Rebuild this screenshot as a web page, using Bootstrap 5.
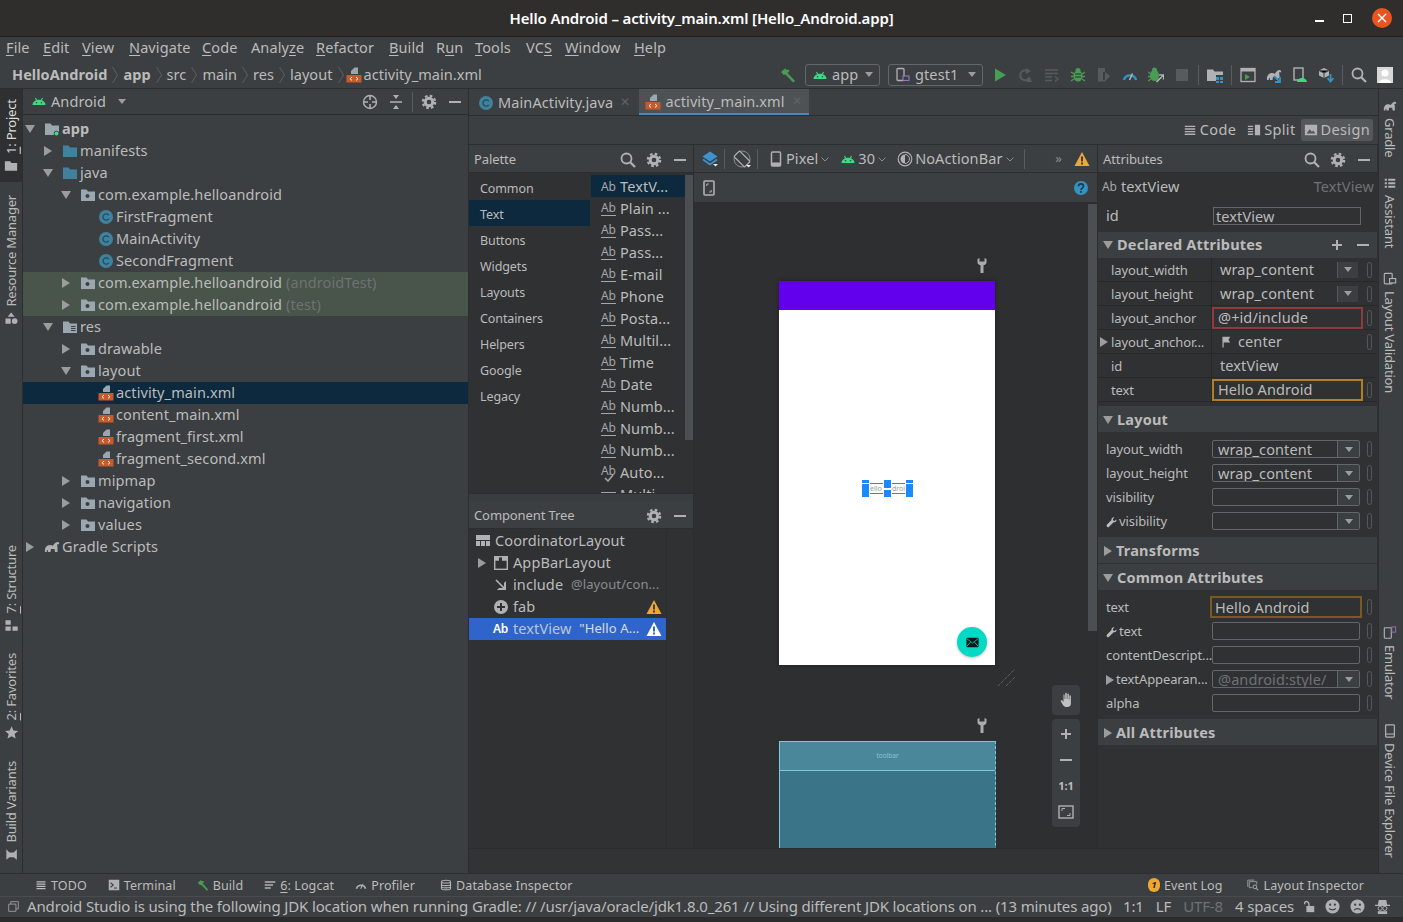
<!DOCTYPE html>
<html lang="en"><head><meta charset="utf-8"><title>Hello Android</title>
<link href="https://cdn.jsdelivr.net/npm/bootstrap@5.3.0/dist/css/bootstrap.min.css" rel="stylesheet">
<style>
:root{--pn:#3c3f41;--dk:#2f3133;--tx:#bbbbbb;--ln:#2b2d2f;--mut:#7d7f80}
html,body{height:922px;width:1403px;overflow:hidden}
body{background:#2a2a2a;color:var(--tx);font-family:"Noto Sans",sans-serif;font-size:14.5px;line-height:1.2;letter-spacing:.1px}
svg{display:block;flex:none}
.ic{width:16px;height:16px;color:#afb1b3}
.ttl{height:37px;background:#302d2d;border-bottom:1px solid #201e1e;color:#fff;font-weight:600;font-size:15px;letter-spacing:-.13px;position:relative}
.win{position:absolute;right:0;top:0;height:36px}
.win i{display:block}
.w-min{width:9px;height:2px;background:#fff;margin:5px 19px 0 0}
.w-max{width:9px;height:9px;border:1.5px solid #fff;margin-right:20px}
.w-x{width:20px;height:20px;border-radius:50%;background:#e95420;margin-right:11px;color:#fff;display:flex!important;align-items:center;justify-content:center}
.menu{height:24px;background:var(--pn);display:grid;grid-template-columns:37px 39px 47px 73px 49px 65px 73px 47px 39px 51px 39px 69px 60px;padding:0 0 2px 6px;align-items:center;font-size:14.5px;white-space:nowrap}
.navb{height:28px;background:var(--pn);border-bottom:1px solid var(--ln);padding:0 5px 0 12px}
.crumb{white-space:nowrap}
.crumb b{font-weight:700;letter-spacing:.05px}
.crumb>span{letter-spacing:.05px}
.chev{width:6px;height:18px;color:#5d6062;margin:0 5px}
.chev.z{margin-right:2px}
.xic{margin-right:2px}
.tb{width:26px;height:26px;display:flex;align-items:center;justify-content:center}
.sep{width:1px;height:20px;background:#5a5d5f;margin:0 3px;flex:none;display:block}
.combo{height:22px;border:1px solid #646769;border-radius:3px;padding:0 6px;gap:4px;display:flex;align-items:center}
.combo.c1{width:75px}.combo.c2{width:95px}
.caret{width:0;height:0;border:4.5px solid transparent;border-top:5px solid #9a9c9e;border-bottom:0;flex:none;display:block}
.combo .caret{margin-left:auto}
.main{height:784px}
.stripe{width:23px;background:var(--pn);flex:none}
.stripe.l{border-right:1px solid var(--ln)}
.stripe.r{width:25px;border-left:1px solid var(--ln);padding-right:3px}
.vt{writing-mode:vertical-rl;font-size:13px;white-space:nowrap;display:flex;align-items:center;gap:5px;letter-spacing:-.2px}
.l .vt{transform:rotate(180deg);flex-direction:row;padding-right:1px}
.vt svg{width:14px;height:14px;color:#afb1b3}
.l .vt svg{transform:rotate(180deg)}
.sel-v{background:#2e3032;color:#ddd;height:93px;padding-top:9px;width:22px;justify-content:flex-start}
.vm1{margin-top:13px}.vm2{margin-top:auto}.vm3{margin-top:20px}.vm4{margin-top:22px;margin-bottom:11px}
.r .vm1{margin-top:19px}.r .vm0{margin-top:10px}.r .vm3{margin-top:23px}.r .vm5{margin-bottom:15px;margin-top:25px}
.proj{width:446px;flex:none;background:var(--pn);border-right:1px solid var(--ln)}
.phead{height:26px;border-bottom:1px solid var(--ln);padding:0 5px 0 8px;font-size:14.5px}
.icg{gap:10px}
.icg .sep{margin:0 -2px}
.tree{padding-top:3px;font-size:14.5px}
.row-t{height:22px;display:flex;align-items:center;white-space:nowrap}
.row-t.sel{background:#0d293e}
.row-t.tst{background:#49544a}
.l0{padding-left:3px}.l1{padding-left:21px}.l2{padding-left:39px}.l3{padding-left:57px}
.slot{width:18px;flex:none;display:flex;align-items:center}
.arr{display:block;width:0;height:0;flex:none}
.arr.d{border:5px solid transparent;border-top:8px solid #9a9c9e;border-bottom:0;margin-left:-1px}
.arr.r{border:5px solid transparent;border-left:8px solid #9a9c9e;border-right:0}
.dim{color:#6f7274}
.ed{width:909px;flex:none;background:var(--dk)}
.tabs{height:27px;background:var(--pn);border-bottom:1px solid var(--ln);padding-left:3px}
.tab{height:26px;padding:1px 5px 0 6px;gap:4px;display:flex;align-items:center;white-space:nowrap}
.tab.on{background:#4e5254;border-bottom:2px solid #4a88c7;padding:1px 7px 0 6px;margin-left:4px}
.x{color:#5f6264;font-size:12px;margin-left:3px}
.modes{height:29px;background:var(--pn);border-bottom:1px solid var(--ln);padding-right:5px;gap:2px;letter-spacing:.35px}
.mode{height:22px;padding:0 3px;gap:3px;display:flex;align-items:center}
.mode .ic{width:14px;height:14px}
.mode:first-child{margin-right:3px}
.mode.on{background:#55585a;border-radius:3px}
.cols{height:703px}
.pal{width:225px;flex:none;border-right:1px solid var(--ln)}
.ph{height:28px;background:var(--pn);border-bottom:1px solid var(--ln);padding:2px 5px 0 5px;font-size:13px;letter-spacing:-.1px;flex:none}
.pal-body{height:320px;padding-top:2px;flex:none}
.cats{width:121px;flex:none;font-size:12.5px;letter-spacing:-.1px}
.cats div{height:26px;padding:3px 0 0 11px;display:flex;align-items:center}
.cats div:first-child{height:25px;padding-top:2px}
.cats .sel{background:#0d293e}
.items{width:95px;flex:none;overflow:hidden;padding-left:1px}
.items div{height:22px;display:flex;align-items:center;white-space:nowrap;padding:2px 0 0 10px;gap:4px}
.items .sel{background:#0d293e}
.sb{width:8px;background:#4b4f51;height:265px;flex:none}
.ab{font-size:12px;color:#a5a7a9;border-bottom:1.5px solid #a5a7a9;line-height:10px;padding-bottom:2px;width:15px;flex:none;letter-spacing:-.2px;display:block}
.ab.n{border:0;padding:0}
.ab.ck{border:0;padding:0;position:relative;top:-2px}
.ab.ck svg{position:absolute;left:3px;top:8px}
.ab.ml{border-top:2px solid #a5a7a9;border-bottom:2px solid #a5a7a9;height:7px;padding:0}
.gapb{height:8px;background:#3a3d3f;border-top:1px solid var(--ln);flex:none}
.ct-b{height:319px;flex:none}
.ct{width:198px;flex:none;border-right:1px solid var(--ln);padding-top:1px}
.ct .row-t{padding-left:6px}
.ct .arr{margin-left:3px}
.ct .sel{background:#2f65ca;color:#b9c6d8}
.ct .sel .ab{color:#fff;font-weight:600;margin-right:5px}
.small{font-size:13px;color:#8a8c8e}
.ct .sel .small{color:#d7dde6}
.des{width:404px;flex:none;border-right:1px solid var(--ln)}
.d1{height:28px;background:var(--pn);border-bottom:1px solid var(--ln);padding:1px 7px 0 8px;font-size:14.5px;flex:none}
.d1 .sep{margin-right:0}
.d2{height:30px;background:var(--pn);border-bottom:1px solid var(--ln);padding:0 8px 0 7px;flex:none}
.m2{margin-left:2px}.m3{margin-left:3px}.m6{margin-left:6px}.m7{margin-left:7px}.m8{margin-left:8px}.m9{margin-left:9px}.m10{margin-left:10px}.m11{margin-left:11px}.m12{margin-left:12px}
.mr12{margin-right:12px}
.rot{width:18px;height:18px}
.canvas{height:645px;background:#2d2f31;position:relative;overflow:hidden}
.phone{position:absolute;left:85px;top:78px;width:216px;height:384px;background:#fff;box-shadow:0 0 4px #1d1e20}
.status{height:29px;background:#6200ee}
.wr{position:absolute;color:#a9abad;width:12px;height:16px;left:282px}
.wr.a{top:55px}.wr.b{top:515px}
.tv{position:absolute;left:83px;top:199px;width:52px;height:17px}
.hb{position:absolute;width:7px;height:17px;top:0;background:linear-gradient(#1a88ff 0 3px,#fff 3px 4px,#1a88ff 4px)}
.h1x{left:0}.h2x{left:22px}.h3x{left:44px}
.hb.m{background:linear-gradient(#1a88ff 0 8px,#fff 8px 10px,#1a88ff 10px)}
.tvl{position:absolute;top:3px;height:11px;border-top:1px solid #1a88ff;border-bottom:1px solid #1a88ff;width:13px;font-size:7px;line-height:9px;color:#999;letter-spacing:0;overflow:hidden}
.t1{left:8px}.t2{left:30px}
.fab{position:absolute;left:178px;top:346px;width:30px;height:30px;border-radius:50%;background:#03dac5;box-shadow:0 1px 3px #0004;display:flex;align-items:center;justify-content:center}
.bp{position:absolute;left:85px;top:538px;width:217px;height:120px;background:#3a7488;border:1px solid #80c8dc;border-right-style:dashed;border-bottom:0}
.bp div{height:29px;background:#4a879b;border-bottom:1px solid #80c8dc;font-size:6.5px;color:#86c5d8;text-align:center;line-height:28px;letter-spacing:0}
.rsz{position:absolute;left:304px;top:466px;width:18px;height:18px;color:#77797b}
.vsb{position:absolute;right:0;top:1px;width:9px;height:427px;background:#4b4f51}
.zm{position:absolute;left:358px;width:28px;background:#3c3f41;border-radius:4px;display:flex;flex-direction:column;align-items:center}
.zm.a{top:482px;height:30px;justify-content:center}
.zm.b{top:516px;height:108px;justify-content:center;gap:10px;font-weight:700;font-size:11px;color:#bbb;letter-spacing:0;line-height:16px}
.attrs{width:279px;flex:none;font-size:14.5px}
.a-title{height:27px;padding:0 3px 0 4px;flex:none}
.a-id{height:32px;padding-left:8px;flex:none}
.inp{border:1px solid #646769;height:18px;background:#2f3133;display:flex;align-items:center;padding-left:2px;color:#bbb;position:relative;line-height:1;overflow:hidden;white-space:nowrap}
.inp.dim{color:#6f7274}
.w148{width:148px;flex:none}
.sech{height:26px;background:var(--pn);font-weight:700;padding:1px 0 0 6px;letter-spacing:.2px;gap:4px;flex:none}
.sech.t{margin-top:1px}
.sech.o{padding:0 6px 0 6px;gap:10px}
.sech.o span{margin-left:-6px}
.r-d,.r-l{display:flex;align-items:center;height:24px;position:relative;flex:none}
.r-d{border-bottom:1px solid #26282a}
.r-d .lb{width:114px;flex:none;padding:2px 0 0 13px;font-size:13px;white-space:nowrap;overflow:hidden;letter-spacing:-.1px;border-right:1px solid #26282a;height:100%;display:flex;align-items:center}
.r-d .v{width:156px;padding:1px 0 0 8px;display:flex;align-items:center;height:100%;position:relative;white-space:nowrap}
.r-d .v.p{padding:0}
.r-d .arr{position:absolute;left:2px}
.pill{position:absolute;left:269px;width:5px;height:16px;border:1px solid #56595b;border-radius:3px}
.dd{position:absolute;width:21px;right:19px;height:16px;background:#3c3f41;border-left:1px solid #56595b;display:flex;align-items:center;justify-content:center}
.box{width:151px;height:22px;border:2px solid;display:flex;align-items:center;padding-left:4px;line-height:1;flex:none}
.box.red{border-color:#8f3b3b}.box.org{border-color:#b37f24}
.flag{width:13px;height:13px;margin-right:5px}
.r-l .lb{width:114px;flex:none;padding:2px 0 0 8px;font-size:13px;white-space:nowrap;letter-spacing:-.1px;display:flex;align-items:center;gap:2px}
.r-l .inp{width:148px;height:18px;border-radius:2px;padding:1px 0 0 5px}
.inp .c{position:absolute;right:0;top:0;bottom:0;width:22px;background:#3c3f41;border-left:1px solid #646769;display:flex;align-items:center;justify-content:center}
.r-l .inp.org2{border:2px solid #7a5a1e;height:22px;width:152px;margin-left:-2px;padding-left:3px;border-radius:0}
.hi{height:5px;flex:none}.lo{height:4px;flex:none}
.edband{height:25px;background:#313335;border-top:1px solid var(--ln)}
.tools{height:23px;background:var(--pn);border-top:1px solid var(--ln);font-size:12.5px;padding:0 39px 0 35px;letter-spacing:.1px}
.tools svg{width:12px;height:12px}
.tg{gap:21px}.tg2{gap:25px}
.tg .ti:last-child{margin-left:4px}
.ti{gap:4px;display:flex;align-items:center;white-space:nowrap}
.stat{height:21px;background:var(--pn);border-top:1px solid #4a4b4c;font-size:15px;padding:0 13px 2px 8px;white-space:nowrap;letter-spacing:-.14px}
.sr{gap:12px}
.sr .i1{margin-left:-4px;margin-right:-1px}.sr .i2,.sr .i3{margin-left:-2px}
.foot{height:5px;background:#2c2c2c}
.badge1{width:12px;height:14px;border-radius:6px;background:#f0a732;color:#222;font-size:9px;font-weight:700;display:flex;align-items:center;justify-content:center;letter-spacing:0}
u{text-underline-offset:2px;text-decoration-thickness:1px}
</style></head><body>
<svg width="0" height="0" class="position-absolute"><defs>
<symbol id="android" viewBox="0 0 16 16"><path fill="#3ddc84" d="M1.5 12c.2-3 3-5.200 6.500-5.200s6.300 2.200 6.500 5.200z"/><path stroke="#3ddc84" stroke-width="1.100" d="M4.500 5l1.200 2.200M11.500 5l-1.200 2.200"/><circle cx="5.500" cy="9.700" r=".8" fill="#3c3f41"/><circle cx="10.500" cy="9.700" r=".8" fill="#3c3f41"/></symbol>
<symbol id="folder" viewBox="0 0 16 16"><path fill="#40829e" d="M1 2.500h5.500l1.500 2h7v9.500H1z"/></symbol>
<symbol id="pkg" viewBox="0 0 16 16"><path fill="#9aa7b0" d="M1 2.500h5.500l1.500 2h7v9.500H1z"/><circle cx="7.500" cy="9" r="2" fill="#3c3f41"/></symbol>
<symbol id="res" viewBox="0 0 16 16"><path fill="#9aa7b0" d="M1 2.500h5.500l1.500 2h7v9.500H1z"/><path stroke="#3c3f41" d="M9 7.500h4.500M9 9.500h4.500M9 11.500h4.500"/></symbol>
<symbol id="mod" viewBox="0 0 16 16"><path fill="#9aa7b0" d="M1 2.500h5.500l1.500 2h7v9.500H1z"/><circle cx="12.500" cy="12.500" r="2.700" fill="#3c3f41"/><circle cx="12.500" cy="12.500" r="2" fill="#3ddc84"/></symbol>
<symbol id="cls" viewBox="0 0 16 16"><circle cx="8" cy="8" r="7" fill="#40829e"/><path fill="none" stroke="#1f4b5d" stroke-width="1.300" d="M10.800 6.100a3.200 3.200 0 1 0 0 3.800"/></symbol>
<symbol id="xml" viewBox="0 0 16 16"><path fill="#9aa7b0" d="M5 7V4l3.500-3.500H12V7z"/><rect x="0.500" y="8" width="15" height="7.500" fill="#c75b2a"/><path fill="none" stroke="#fff" stroke-width=".9" d="M6 10l-2 1.700 2 1.700M10 10l2 1.700-2 1.700"/></symbol>
<symbol id="gear" viewBox="0 0 16 16"><circle cx="8" cy="8" r="3.800" fill="none" stroke="currentColor" stroke-width="3"/><circle cx="8" cy="8" r="6.200" fill="none" stroke="currentColor" stroke-width="2.200" stroke-dasharray="2.600 2.270"/></symbol>
<symbol id="min" viewBox="0 0 16 16"><rect x="2" y="7" width="12" height="2" fill="currentColor"/></symbol>
<symbol id="plus" viewBox="0 0 16 16"><path d="M7 3h2v4h4v2H9v4H7V9H3V7h4z" fill="currentColor"/></symbol>
<symbol id="search" viewBox="0 0 16 16"><circle cx="6.500" cy="6.500" r="5" fill="none" stroke="currentColor" stroke-width="1.800"/><path stroke="currentColor" stroke-width="2.200" d="M10 10l5 5"/></symbol>
<symbol id="loc" viewBox="0 0 16 16"><circle cx="8" cy="8" r="6.500" fill="none" stroke="currentColor" stroke-width="1.400"/><path stroke="currentColor" stroke-width="1.600" d="M8 1v5M8 10v5M1 8h5M10 8h5"/></symbol>
<symbol id="coll" viewBox="0 0 16 16"><path fill="currentColor" d="M2 7.200h12v1.600H2zM5 1h6L8 5zM8 11l3 4H5z"/></symbol>
<symbol id="hammer" viewBox="0 0 16 16"><path fill="#499c54" d="M1 5l4-3.500 2 1.500 1.500-.5 1 1.500L7.500 6 15 14l-1.800 1.500L5.500 7.500 3.800 8z"/></symbol>
<symbol id="phone" viewBox="0 0 16 16"><rect x="3.500" y="1" width="9" height="14" rx="1" fill="none" stroke="currentColor" stroke-width="1.500"/><rect x="3.500" y="11.500" width="9" height="3.500" fill="currentColor"/></symbol>
<symbol id="dev" viewBox="0 0 16 16"><rect x="2" y="1.500" width="7" height="12" rx="1" fill="none" stroke="#afb1b3" stroke-width="1.300"/><rect x="8" y="9" width="6" height="4.500" fill="#3c3f41" stroke="#9876c0" stroke-width="1.100"/></symbol>
<symbol id="run" viewBox="0 0 16 16"><path fill="#499c54" d="M3 1.500L14 8 3 14.500z"/></symbol>
<symbol id="apply" viewBox="0 0 16 16"><path fill="none" stroke="#585b5d" stroke-width="2" d="M11 5a5 5 0 1 0 0 6.500"/><path fill="#585b5d" d="M8 1l5 3-5 3zM11 9l3 6H8z"/></symbol>
<symbol id="lines" viewBox="0 0 16 16"><path stroke="#585b5d" stroke-width="1.500" d="M1 3h13M1 6.500h13M1 10h7M1 13.500h7"/><path fill="none" stroke="#585b5d" stroke-width="1.400" d="M11 9.500l3 2.500-3 2.500"/></symbol>
<symbol id="bug" viewBox="0 0 16 16"><ellipse cx="8" cy="9" rx="4.500" ry="5.500" fill="#499c54"/><circle cx="8" cy="3.500" r="2.500" fill="#499c54"/><path stroke="#499c54" stroke-width="1.300" d="M1 5l3 2M15 5l-3 2M1 9.500h3M12 9.500h3M1 14l3-2M15 14l-3-2"/><path stroke="#2f3133" d="M5 7h6M5 10h6"/></symbol>
<symbol id="cover" viewBox="0 0 16 16"><path fill="#585b5d" d="M2 1h7v4l5 4-5 5.500H2z"/><path fill="#3c3f41" d="M7 5h2v8H7z"/></symbol>
<symbol id="prof" viewBox="0 0 16 16"><path fill="none" stroke="#3592c4" stroke-width="2.400" d="M2 13a6.200 6.200 0 0 1 12 0"/><path stroke="#afb1b3" stroke-width="1.600" d="M7.500 13l3-6.500"/></symbol>
<symbol id="bugA" viewBox="0 0 16 16"><ellipse cx="6.500" cy="8.500" rx="4.500" ry="5.500" fill="#499c54"/><circle cx="6.500" cy="3" r="2.500" fill="#499c54"/><path stroke="#499c54" stroke-width="1.300" d="M0 5l3 2M0 9.500h3M0 14l3-2"/><path stroke="#afb1b3" stroke-width="1.700" d="M8.500 15L15 8.500M11 8h4.500v4.500"/></symbol>
<symbol id="stop" viewBox="0 0 16 16"><rect x="2" y="2" width="12" height="12" fill="#585b5d"/></symbol>
<symbol id="struct" viewBox="0 0 16 16"><path fill="#afb1b3" d="M0 2.500h6l1.500 2H16V14H0z"/><rect x="9" y="8" width="7" height="8" fill="#3c3f41"/><path fill="#3592c4" d="M9 10h3v3H9zM13 10h3v3h-3zM13 14h3v2h-3zM9 14h3v2H9z"/></symbol>
<symbol id="term" viewBox="0 0 16 16"><rect x="1" y="1.500" width="14" height="13" fill="none" stroke="#afb1b3" stroke-width="1.300"/><path fill="#afb1b3" d="M1 1.500h14v3H1z"/><path fill="#499c54" d="M5 7l5 3-5 3z"/></symbol>
<symbol id="gradle" viewBox="0 0 16 16"><path fill="#afb1b3" d="M1 13c-.5-4 1.500-7 5-7 1 0 2 .3 3 .8C10 4.500 12 3 13.500 3c1.500 0 2 1.300 1.500 2.500-.7-.3-1.500-.3-2 .2.800 2 .5 4.800.5 7.300h-2.500l-.5-3H7l-.5 3H4L3.700 11H3l-.3 2z"/></symbol>
<symbol id="grdl2" viewBox="0 0 16 16"><use href="#gradle"/><path stroke="#3592c4" stroke-width="1.800" d="M8 9l6 6M14 10v5H9"/></symbol>
<symbol id="devA" viewBox="0 0 16 16"><rect x="2" y="1" width="9" height="12" fill="none" stroke="#afb1b3" stroke-width="1.400"/><path fill="#3ddc84" d="M5 15c.2-2.300 2.300-4 5-4s4.800 1.700 5 4z"/></symbol>
<symbol id="sdk" viewBox="0 0 16 16"><path fill="#afb1b3" d="M6 1l5 2.500v5L6 11 1 8.500v-5z"/><path stroke="#3c3f41" d="M1 3.500L6 6l5-2.500M6 6v5"/><path stroke="#3592c4" stroke-width="1.800" fill="none" d="M12.500 7v7M9.500 11l3 3.500 3-3.500"/></symbol>
<symbol id="layers" viewBox="0 0 16 16"><path fill="#3d93cf" d="M8 .5l7.500 5L8 10.500.5 5.500z"/><path fill="none" stroke="#3d93cf" stroke-width="1.800" d="M1 8.500l7 5 7-5"/><path fill="#e8e8e8" d="M11 13h5l-2.500 2.500z"/></symbol>
<symbol id="rot" viewBox="0 0 18 18"><circle cx="9" cy="9" r="8" fill="none" stroke="#8f9193" stroke-width=".9"/><rect x="5" y="1.500" width="8" height="15" rx="1" transform="rotate(-45 9 9)" fill="#3c3f41" stroke="#afb1b3" stroke-width="1.200"/><path fill="#e8e8e8" d="M13 15h5l-2.500 2.500z"/></symbol>
<symbol id="theme" viewBox="0 0 16 16"><circle cx="8" cy="8" r="6.800" fill="none" stroke="#afb1b3" stroke-width="1.200"/><path fill="#afb1b3" d="M8 3.500a4.500 4.500 0 0 0 0 9z"/><path fill="none" stroke="#afb1b3" stroke-width="1" d="M8 3.500a4.500 4.500 0 0 1 0 9"/></symbol>
<symbol id="warn" viewBox="0 0 16 16"><path fill="#f0a732" d="M8 1l7.500 14H.5z"/><path fill="#3c3f41" d="M7 5.500h2v5H7zM7 11.500h2v2H7z"/></symbol>
<symbol id="warnw" viewBox="0 0 16 16"><path fill="#fff" d="M8 1l7.500 14H.5z"/><path fill="#2f65ca" d="M7 5.500h2v5H7zM7 11.500h2v2H7z"/></symbol>
<symbol id="help" viewBox="0 0 16 16"><circle cx="8" cy="8" r="7" fill="#3592c4"/><path fill="none" stroke="#1d3a4a" stroke-width="1.700" d="M5.500 6.200c0-3.200 5-3.200 5 0 0 2-2.500 1.800-2.500 3.800"/><rect x="7.100" y="11" width="1.800" height="1.800" fill="#1d3a4a"/></symbol>
<symbol id="frame" viewBox="0 0 16 16"><rect x="3" y="1" width="10" height="14" rx="1" fill="none" stroke="#afb1b3" stroke-width="1.600"/><path fill="none" stroke="#afb1b3" d="M5.800 6V4h2M10.200 10v2h-2"/></symbol>
<symbol id="lst" viewBox="0 0 16 16"><path fill="currentColor" d="M2 3h12v1.600H2zM2 6h12v1.600H2zM2 9h12v1.600H2zM2 12h12v1.600H2z"/></symbol>
<symbol id="spl" viewBox="0 0 16 16"><path fill="currentColor" d="M9 2h6v12H9zM1 3h6v1.600H1zM1 6h6v1.600H1zM1 9h6v1.600H1zM1 12h6v1.600H1z"/></symbol>
<symbol id="pic" viewBox="0 0 16 16"><rect x="1" y="2" width="14" height="12" fill="currentColor"/><path fill="#55585a" d="M3 12l3.500-5 2.500 3 1.500-1.500 2.500 3.500z"/></symbol>
<symbol id="wrench" viewBox="0 0 12 16"><path fill="currentColor" d="M1.500 1v3.500c0 1.500 1.500 2.500 3 2.800V15h3V7.300c1.500-.3 3-1.300 3-2.800V1L8.500 0v3.500h-5V0z"/></symbol>
<symbol id="wr2" viewBox="0 0 16 16"><path fill="currentColor" d="M15 3.500l-2.500 2.300-2-.6-.6-2L12.300.5C10-.5 7.500 1.500 8 4.500L1.500 11a2 2 0 0 0 3 3L11 7.500c3 .7 5-1.800 4-4z"/></symbol>
<symbol id="hand" viewBox="0 0 16 16"><path fill="#c0c0c0" d="M5.500 2.500c.8-.3 1 .3 1.100 1V7h.6V1.500c.2-1 1.400-1 1.600 0V7h.6V2.200c.2-1 1.400-1 1.500 0V7.500h.5V4c.2-1 1.400-1 1.500 0v7.500c0 2.500-1.500 3.500-4 3.500-2.800 0-3.500-1-6-5.500-.5-1 .7-1.700 1.500-1L5.500 10z"/></symbol>
<symbol id="fit" viewBox="0 0 16 16"><rect x="1" y="2" width="14" height="12" fill="none" stroke="#afb1b3" stroke-width="1.400"/><path fill="none" stroke="#afb1b3" d="M4 7V4.500h3M12 9v2.500H9"/></symbol>
<symbol id="coord" viewBox="0 0 16 16"><path fill="#afb1b3" d="M1 2h14v5H1zM1 8h4v5H1zM6 8h4v5H6zM11 8h4v5h-4z"/></symbol>
<symbol id="appbar" viewBox="0 0 16 16"><rect x="1.700" y="1.700" width="12.600" height="12.600" fill="none" stroke="#afb1b3" stroke-width="1.400"/><path fill="#afb1b3" d="M1.700 1.700h4.300v4H1.700zM9 1.700h5.300v4H9z"/></symbol>
<symbol id="inc" viewBox="0 0 16 16"><path stroke="#afb1b3" stroke-width="1.700" d="M3 3l8 8"/><path fill="#afb1b3" d="M13 4v9H4l2-2h5V6z"/></symbol>
<symbol id="fabi" viewBox="0 0 16 16"><circle cx="8" cy="8" r="7" fill="#afb1b3"/><path fill="#2f3133" d="M7 4h2v3h3v2H9v3H7V9H4V7h3z"/></symbol>
<symbol id="flag" viewBox="0 0 16 16"><path fill="#afb1b3" d="M3 1h9.500l-2 3.500 2 3.500H4.500v6H3z"/></symbol>
<symbol id="prj" viewBox="0 0 16 16"><path fill="currentColor" d="M1 2.500h6l1.500 2H15v9H1z"/></symbol>
<symbol id="rm" viewBox="0 0 16 16"><path fill="#afb1b3" d="M7.500 1l4 5h-8zM1 8h6v6H1z"/><circle cx="11.500" cy="11" r="3.200" fill="#afb1b3"/></symbol>
<symbol id="str" viewBox="0 0 16 16"><path fill="#afb1b3" d="M1 2h6v5H1zM1 9h6v5H1zM9 9h6v5H9z"/></symbol>
<symbol id="star" viewBox="0 0 16 16"><path fill="#afb1b3" d="M8 1l2.100 4.900 5.400.5-4.100 3.500 1.300 5.200L8 12.300l-4.700 2.800 1.300-5.200L.5 6.400l5.400-.5z"/></symbol>
<symbol id="bv" viewBox="0 0 16 16"><path fill="#afb1b3" d="M2 2l3.500 3.500h5L14 2v12l-3.500-3h-5L2 14z"/></symbol>
<symbol id="asst" viewBox="0 0 16 16"><path fill="#afb1b3" d="M2 3h2.500v2.500H2zM6 3h8v2.500H6zM2 7h2.500v2.500H2zM6 7h8v2.500H6zM2 11h2.500v2.500H2zM6 11h8v2.500H6z"/></symbol>
<symbol id="lv" viewBox="0 0 16 16"><rect x="1.500" y="1.500" width="9" height="12" rx="1" fill="none" stroke="#afb1b3" stroke-width="1.300"/><rect x="7.500" y="7.500" width="7" height="5" fill="#3c3f41" stroke="#afb1b3" stroke-width="1.300"/></symbol>
<symbol id="emu" viewBox="0 0 16 16"><rect x="1.500" y="2" width="8" height="12" rx="1" fill="none" stroke="#afb1b3" stroke-width="1.300"/><rect x="10" y="1" width="4.500" height="6" fill="none" stroke="#9876c0"/></symbol>
<symbol id="dfe" viewBox="0 0 16 16"><rect x="3" y="1" width="10" height="14" rx="1" fill="none" stroke="#afb1b3" stroke-width="1.400"/><path stroke="#afb1b3" stroke-width="1.300" d="M3 11.500h10"/></symbol>
<symbol id="term2" viewBox="0 0 16 16"><rect x="1" y="1" width="14" height="14" fill="#afb1b3"/><path fill="none" stroke="#3c3f41" stroke-width="1.500" d="M3.500 5L7 8l-3.500 3M8 12h4"/></symbol>
<symbol id="logc" viewBox="0 0 16 16"><path fill="#afb1b3" d="M1 3h14v2H1zM1 7h11v2H1zM1 11h8v2H1z"/></symbol>
<symbol id="db" viewBox="0 0 16 16"><path fill="none" stroke="#afb1b3" stroke-width="1.500" d="M2 3.500c0-2.500 12-2.500 12 0v9c0 2.500-12 2.500-12 0zM2 3.500c0 2.500 12 2.500 12 0M2 7c0 2.500 12 2.500 12 0M2 10c0 2.500 12 2.500 12 0"/></symbol>
<symbol id="pro2" viewBox="0 0 16 16"><path fill="none" stroke="#afb1b3" stroke-width="2.200" d="M2 13a6.200 6.200 0 0 1 12 0"/><path stroke="#afb1b3" stroke-width="1.500" d="M7.500 13l3-6"/></symbol>
<symbol id="li" viewBox="0 0 16 16"><path fill="none" stroke="#afb1b3" d="M1 1.500h9M1 1.500v9M3 3.500h10v4M3 3.500v8h4"/><circle cx="10.500" cy="10.500" r="2.500" fill="none" stroke="#afb1b3" stroke-width="1.200"/><path stroke="#afb1b3" stroke-width="1.400" d="M12.500 12.500l2.500 2.500"/></symbol>
<symbol id="box" viewBox="0 0 16 16"><path fill="none" stroke="#afb1b3" stroke-width="1.100" d="M1 4.500h10.500V15H1zM4 4.500V1h11v10.500h-3.500"/></symbol>
<symbol id="lock" viewBox="0 0 16 16"><rect x="5" y="8" width="9" height="7" fill="#afb1b3"/><path fill="none" stroke="#afb1b3" stroke-width="1.600" d="M3 6c-.5-4.500 5-4.500 5 1.500V8"/></symbol>
<symbol id="sm" viewBox="0 0 16 16"><circle cx="8" cy="8" r="7.500" fill="#afb1b3"/><circle cx="5.500" cy="6" r="1.200" fill="#3c3f41"/><circle cx="10.500" cy="6" r="1.200" fill="#3c3f41"/><path fill="none" stroke="#3c3f41" stroke-width="1.300" d="M4.500 10c1.500 2.200 5.500 2.200 7 0"/></symbol>
<symbol id="fr" viewBox="0 0 16 16"><circle cx="8" cy="8" r="7.500" fill="#afb1b3"/><circle cx="5.500" cy="6" r="1.200" fill="#3c3f41"/><circle cx="10.500" cy="6" r="1.200" fill="#3c3f41"/><path fill="none" stroke="#3c3f41" stroke-width="1.300" d="M4.500 12c1.500-2.200 5.500-2.200 7 0"/></symbol>
<symbol id="insp" viewBox="0 0 16 16"><path fill="#afb1b3" d="M4 1h8l1 5h3v1.500H0V6h3z"/><circle cx="5.500" cy="10" r="2.200" fill="none" stroke="#afb1b3"/><circle cx="10.500" cy="10" r="2.200" fill="none" stroke="#afb1b3"/><path fill="#afb1b3" d="M3 13h10v3H3z"/></symbol>
<symbol id="mail" viewBox="0 0 16 16"><rect x="1.500" y="3" width="13" height="10" rx="1" fill="#10171a"/><path fill="none" stroke="#03dac5" stroke-width=".8" d="M2 4l6 4.500L14 4M2 12l4-4.500M14 12l-4-4.500"/></symbol>
</defs></svg>

<header class="ttl d-flex align-items-center justify-content-center">
  <span>Hello Android – activity_main.xml [Hello_Android.app]</span>
  <div class="win d-flex align-items-center"><i class="w-min"></i><i class="w-max"></i><i class="w-x"><svg width="10" height="10" viewBox="0 0 10 10"><path stroke="#fff" stroke-width="1.400" d="M1 1l8 8M9 1L1 9"/></svg></i></div>
</header>

<nav class="menu">
  <span><u>F</u>ile</span><span><u>E</u>dit</span><span><u>V</u>iew</span><span><u>N</u>avigate</span><span><u>C</u>ode</span><span>Analy<u>z</u>e</span><span><u>R</u>efactor</span><span><u>B</u>uild</span><span>R<u>u</u>n</span><span><u>T</u>ools</span><span>VC<u>S</u></span><span><u>W</u>indow</span><span><u>H</u>elp</span>
</nav>

<div class="navb d-flex align-items-center justify-content-between">
  <div class="crumb d-flex align-items-center">
    <b>HelloAndroid</b><svg class="chev" viewBox="0 0 6 18"><path fill="none" stroke="currentColor" d="M.5 1l5 8-5 8"/></svg>
    <b>app</b><svg class="chev" viewBox="0 0 6 18"><path fill="none" stroke="currentColor" d="M.5 1l5 8-5 8"/></svg>
    <span>src</span><svg class="chev" viewBox="0 0 6 18"><path fill="none" stroke="currentColor" d="M.5 1l5 8-5 8"/></svg>
    <span>main</span><svg class="chev" viewBox="0 0 6 18"><path fill="none" stroke="currentColor" d="M.5 1l5 8-5 8"/></svg>
    <span>res</span><svg class="chev" viewBox="0 0 6 18"><path fill="none" stroke="currentColor" d="M.5 1l5 8-5 8"/></svg>
    <span>layout</span><svg class="chev z" viewBox="0 0 6 18"><path fill="none" stroke="currentColor" d="M.5 1l5 8-5 8"/></svg>
    <svg class="ic xic"><use href="#xml"/></svg><span>activity_main.xml</span>
  </div>
  <div class="d-flex align-items-center">
    <span class="tb"><svg class="ic"><use href="#hammer"/></svg></span>
    <div class="combo c1 ms-1"><svg class="ic"><use href="#android"/></svg><span>app</span><i class="caret"></i></div>
    <div class="combo c2 ms-2"><svg class="ic"><use href="#dev"/></svg><span>gtest1</span><i class="caret"></i></div>
    <span class="tb ms-1"><svg class="ic"><use href="#run"/></svg></span><span class="tb"><svg class="ic"><use href="#apply"/></svg></span><span class="tb"><svg class="ic"><use href="#lines"/></svg></span><span class="tb"><svg class="ic"><use href="#bug"/></svg></span><span class="tb"><svg class="ic"><use href="#cover"/></svg></span><span class="tb"><svg class="ic"><use href="#prof"/></svg></span><span class="tb"><svg class="ic"><use href="#bugA"/></svg></span><span class="tb"><svg class="ic"><use href="#stop"/></svg></span>
    <i class="sep"></i><span class="tb"><svg class="ic"><use href="#struct"/></svg></span><i class="sep"></i>
    <span class="tb"><svg class="ic"><use href="#term"/></svg></span><span class="tb"><svg class="ic"><use href="#grdl2"/></svg></span><span class="tb"><svg class="ic"><use href="#devA"/></svg></span><span class="tb"><svg class="ic"><use href="#sdk"/></svg></span>
    <i class="sep"></i><span class="tb"><svg class="ic"><use href="#search"/></svg></span>
    <span class="tb"><svg width="16" height="16" viewBox="0 0 16 16"><rect width="16" height="16" fill="#d8d8d8"/><circle cx="8" cy="6" r="3.500" fill="#fff"/><path fill="#fff" d="M2 16c0-5 12-5 12 0z"/></svg></span>
  </div>
</div>

<div class="main d-flex">
  <aside class="stripe l d-flex flex-column align-items-center">
    <div class="vt sel-v"><svg><use href="#prj"/></svg><span><u>1</u>: Project</span></div>
    <div class="vt vm1"><svg><use href="#rm"/></svg><span>Resource Manager</span></div>
    <div class="vt vm2"><svg><use href="#str"/></svg><span><u>7</u>: Structure</span></div>
    <div class="vt vm3"><svg><use href="#star"/></svg><span><u>2</u>: Favorites</span></div>
    <div class="vt vm4"><svg><use href="#bv"/></svg><span>Build Variants</span></div>
  </aside>

  <section class="proj d-flex flex-column">
    <div class="phead d-flex align-items-center justify-content-between">
      <div class="d-flex align-items-center gap-1"><svg class="ic"><use href="#android"/></svg><span>Android</span><i class="caret ms-2"></i></div>
      <div class="d-flex align-items-center icg">
        <svg class="ic"><use href="#loc"/></svg><svg class="ic"><use href="#coll"/></svg><i class="sep"></i><svg class="ic"><use href="#gear"/></svg><svg class="ic"><use href="#min"/></svg>
      </div>
    </div>
    <div class="tree">
      <div class="row-t l0"><span class="slot"><i class="arr d"></i></span><span class="slot"><svg class="ic"><use href="#mod"/></svg></span><b>app</b></div>
      <div class="row-t l1"><span class="slot"><i class="arr r"></i></span><span class="slot"><svg class="ic"><use href="#folder"/></svg></span>manifests</div>
      <div class="row-t l1"><span class="slot"><i class="arr d"></i></span><span class="slot"><svg class="ic"><use href="#folder"/></svg></span>java</div>
      <div class="row-t l2"><span class="slot"><i class="arr d"></i></span><span class="slot"><svg class="ic"><use href="#pkg"/></svg></span>com.example.helloandroid</div>
      <div class="row-t l3"><span class="slot"></span><span class="slot"><svg class="ic"><use href="#cls"/></svg></span>FirstFragment</div>
      <div class="row-t l3"><span class="slot"></span><span class="slot"><svg class="ic"><use href="#cls"/></svg></span>MainActivity</div>
      <div class="row-t l3"><span class="slot"></span><span class="slot"><svg class="ic"><use href="#cls"/></svg></span>SecondFragment</div>
      <div class="row-t l2 tst"><span class="slot"><i class="arr r"></i></span><span class="slot"><svg class="ic"><use href="#pkg"/></svg></span>com.example.helloandroid&nbsp;<span class="dim">(androidTest)</span></div>
      <div class="row-t l2 tst"><span class="slot"><i class="arr r"></i></span><span class="slot"><svg class="ic"><use href="#pkg"/></svg></span>com.example.helloandroid&nbsp;<span class="dim">(test)</span></div>
      <div class="row-t l1"><span class="slot"><i class="arr d"></i></span><span class="slot"><svg class="ic"><use href="#res"/></svg></span>res</div>
      <div class="row-t l2"><span class="slot"><i class="arr r"></i></span><span class="slot"><svg class="ic"><use href="#pkg"/></svg></span>drawable</div>
      <div class="row-t l2"><span class="slot"><i class="arr d"></i></span><span class="slot"><svg class="ic"><use href="#pkg"/></svg></span>layout</div>
      <div class="row-t l3 sel"><span class="slot"></span><span class="slot"><svg class="ic"><use href="#xml"/></svg></span>activity_main.xml</div>
      <div class="row-t l3"><span class="slot"></span><span class="slot"><svg class="ic"><use href="#xml"/></svg></span>content_main.xml</div>
      <div class="row-t l3"><span class="slot"></span><span class="slot"><svg class="ic"><use href="#xml"/></svg></span>fragment_first.xml</div>
      <div class="row-t l3"><span class="slot"></span><span class="slot"><svg class="ic"><use href="#xml"/></svg></span>fragment_second.xml</div>
      <div class="row-t l2"><span class="slot"><i class="arr r"></i></span><span class="slot"><svg class="ic"><use href="#pkg"/></svg></span>mipmap</div>
      <div class="row-t l2"><span class="slot"><i class="arr r"></i></span><span class="slot"><svg class="ic"><use href="#pkg"/></svg></span>navigation</div>
      <div class="row-t l2"><span class="slot"><i class="arr r"></i></span><span class="slot"><svg class="ic"><use href="#pkg"/></svg></span>values</div>
      <div class="row-t l0"><span class="slot"><i class="arr r"></i></span><span class="slot"><svg class="ic"><use href="#gradle"/></svg></span>Gradle Scripts</div>
    </div>
  </section>

  <section class="ed d-flex flex-column">
    <div class="tabs d-flex">
      <div class="tab"><svg class="ic"><use href="#cls"/></svg><span>MainActivity.java</span><span class="x">✕</span></div>
      <div class="tab on"><svg class="ic"><use href="#xml"/></svg><span>activity_main.xml</span><span class="x">✕</span></div>
    </div>
    <div class="modes d-flex align-items-center justify-content-end">
      <div class="mode"><svg class="ic"><use href="#lst"/></svg>Code</div>
      <div class="mode"><svg class="ic"><use href="#spl"/></svg>Split</div>
      <div class="mode on"><svg class="ic"><use href="#pic"/></svg>Design</div>
    </div>
    <div class="cols d-flex">
      <div class="pal d-flex flex-column">
        <div class="ph d-flex align-items-center justify-content-between"><span>Palette</span><div class="d-flex icg"><svg class="ic"><use href="#search"/></svg><svg class="ic"><use href="#gear"/></svg><svg class="ic"><use href="#min"/></svg></div></div>
        <div class="pal-body d-flex">
          <div class="cats"><div>Common</div><div class="sel">Text</div><div>Buttons</div><div>Widgets</div><div>Layouts</div><div>Containers</div><div>Helpers</div><div>Google</div><div>Legacy</div></div>
          <div class="items">
            <div class="sel"><span class="ab n">Ab</span>TextV...</div>
            <div><span class="ab">Ab</span>Plain ...</div><div><span class="ab">Ab</span>Pass...</div><div><span class="ab">Ab</span>Pass...</div><div><span class="ab">Ab</span>E-mail</div><div><span class="ab">Ab</span>Phone</div><div><span class="ab">Ab</span>Posta...</div><div><span class="ab">Ab</span>Multil...</div><div><span class="ab">Ab</span>Time</div><div><span class="ab">Ab</span>Date</div><div><span class="ab">Ab</span>Numb...</div><div><span class="ab">Ab</span>Numb...</div><div><span class="ab">Ab</span>Numb...</div><div><span class="ab ck">Ab<svg width="10" height="8" viewBox="0 0 10 8"><path fill="none" stroke="#a5a7a9" stroke-width="1.500" d="M1 4l3 3 5-6"/></svg></span>Auto...</div><div><span class="ab ml"></span>Multi...</div>
          </div>
          <div class="sb"></div>
        </div>
        <div class="gapb"></div>
        <div class="ph d-flex align-items-center justify-content-between"><span>Component Tree</span><div class="d-flex icg"><svg class="ic"><use href="#gear"/></svg><svg class="ic"><use href="#min"/></svg></div></div>
        <div class="ct-b d-flex">
          <div class="ct">
            <div class="row-t"><svg class="ic me-1"><use href="#coord"/></svg>CoordinatorLayout</div>
            <div class="row-t"><span class="slot"><i class="arr r"></i></span><svg class="ic me-1"><use href="#appbar"/></svg>AppBarLayout</div>
            <div class="row-t"><span class="slot"></span><svg class="ic me-1"><use href="#inc"/></svg>include&nbsp;&nbsp;<span class="small">@layout/con...</span></div>
            <div class="row-t"><span class="slot"></span><svg class="ic me-1"><use href="#fabi"/></svg>fab<svg class="ic ms-auto me-1"><use href="#warn"/></svg></div>
            <div class="row-t sel"><span class="slot"></span><span class="ab n">Ab</span>textView&nbsp;&nbsp;<span class="small">"Hello A...</span><svg class="ic ms-auto me-1"><use href="#warnw"/></svg></div>
          </div>
        </div>
      </div>

      <div class="des d-flex flex-column">
        <div class="d1 d-flex align-items-center">
          <svg class="ic"><use href="#layers"/></svg><i class="sep m6"></i><svg class="rot m8"><use href="#rot"/></svg><i class="sep m6"></i>
          <svg class="ic m10"><use href="#phone"/></svg><span class="m2">Pixel</span><svg class="m3" width="8" height="5" viewBox="0 0 8 5"><path fill="none" stroke="#8a8c8e" d="M.5.5L4 4 7.500.5"/></svg>
          <svg class="ic m11"><use href="#android"/></svg><span class="m2">30</span><svg class="m3" width="8" height="5" viewBox="0 0 8 5"><path fill="none" stroke="#8a8c8e" d="M.5.5L4 4 7.500.5"/></svg>
          <svg class="ic m11"><use href="#theme"/></svg><span class="m2">NoActionBar</span><svg class="m3" width="8" height="5" viewBox="0 0 8 5"><path fill="none" stroke="#8a8c8e" d="M.5.5L4 4 7.500.5"/></svg>
          <i class="sep m10"></i><span class="small ms-auto mr12">»</span><svg class="ic"><use href="#warn"/></svg>
        </div>
        <div class="d2 d-flex align-items-center justify-content-between"><svg class="ic"><use href="#frame"/></svg><svg class="ic"><use href="#help"/></svg></div>
        <div class="canvas">
          <svg class="wr a"><use href="#wrench"/></svg>
          <div class="phone">
            <div class="status"></div>
            <div class="tv"><i class="hb h1x"></i><span class="tvl t1">ello</span><i class="hb m h2x"></i><span class="tvl t2">droi</span><i class="hb h3x"></i></div>
            <div class="fab"><svg width="15" height="15"><use href="#mail"/></svg></div>
          </div>
          <svg class="rsz" viewBox="0 0 18 18"><path stroke="currentColor" stroke-dasharray="1 1" d="M0 17L17 0M8 17l9-9"/></svg>
          <svg class="wr b"><use href="#wrench"/></svg>
          <div class="bp"><div>toolbar</div></div>
          <i class="vsb"></i>
          <div class="zm a"><svg class="ic"><use href="#hand"/></svg></div>
          <div class="zm b"><svg class="ic"><use href="#plus"/></svg><svg class="ic"><use href="#min"/></svg><span>1:1</span><svg class="ic"><use href="#fit"/></svg></div>
        </div>
      </div>

      <div class="attrs d-flex flex-column">
        <div class="ph d-flex align-items-center justify-content-between"><span>Attributes</span><div class="d-flex icg"><svg class="ic"><use href="#search"/></svg><svg class="ic"><use href="#gear"/></svg><svg class="ic"><use href="#min"/></svg></div></div>
        <div class="a-title d-flex align-items-center"><span class="ab n me-1">Ab</span><span>textView</span><span class="dim ms-auto">TextView</span></div>
        <div class="a-id d-flex align-items-center"><span class="flex-shrink-0">id</span><div class="inp w148 ms-auto me-3">textView</div></div>
        <div class="sech o d-flex align-items-center"><i class="arr d"></i><span>Declared Attributes</span><svg class="ic ms-auto"><use href="#plus"/></svg><svg class="ic"><use href="#min"/></svg></div>
        <div class="r-d"><span class="lb">layout_width</span><span class="v">wrap_content</span><span class="dd"><i class="caret"></i></span><i class="pill"></i></div>
        <div class="r-d"><span class="lb">layout_height</span><span class="v">wrap_content</span><span class="dd"><i class="caret"></i></span><i class="pill"></i></div>
        <div class="r-d"><span class="lb">layout_anchor</span><span class="v p"><span class="box red">@+id/include</span></span><i class="pill"></i></div>
        <div class="r-d"><i class="arr r"></i><span class="lb">layout_anchor...</span><span class="v"><svg class="flag"><use href="#flag"/></svg>center</span><i class="pill"></i></div>
        <div class="r-d"><span class="lb">id</span><span class="v">textView</span></div>
        <div class="r-d"><span class="lb">text</span><span class="v p"><span class="box org">Hello Android</span></span><i class="pill"></i></div>
        <div class="lo"></div>
        <div class="sech d-flex align-items-center"><i class="arr d"></i><span>Layout</span></div>
        <div class="hi"></div>
        <div class="r-l"><span class="lb">layout_width</span><div class="inp">wrap_content<span class="c"><i class="caret"></i></span></div><i class="pill"></i></div>
        <div class="r-l"><span class="lb">layout_height</span><div class="inp">wrap_content<span class="c"><i class="caret"></i></span></div><i class="pill"></i></div>
        <div class="r-l"><span class="lb">visibility</span><div class="inp"><span class="c"><i class="caret"></i></span></div><i class="pill"></i></div>
        <div class="r-l"><span class="lb"><svg width="11" height="11"><use href="#wr2"/></svg>visibility</span><div class="inp"><span class="c"><i class="caret"></i></span></div><i class="pill"></i></div>
        <div class="lo"></div>
        <div class="sech d-flex align-items-center"><i class="arr r"></i><span>Transforms</span></div>
        <div class="sech t d-flex align-items-center"><i class="arr d"></i><span>Common Attributes</span></div>
        <div class="hi"></div>
        <div class="r-l"><span class="lb">text</span><div class="inp org2">Hello Android</div><i class="pill"></i></div>
        <div class="r-l"><span class="lb"><svg width="11" height="11"><use href="#wr2"/></svg>text</span><div class="inp"></div><i class="pill"></i></div>
        <div class="r-l"><span class="lb">contentDescript...</span><div class="inp"></div><i class="pill"></i></div>
        <div class="r-l"><span class="lb"><i class="arr r"></i>textAppearan...</span><div class="inp dim">@android:style/<span class="c"><i class="caret"></i></span></div><i class="pill"></i></div>
        <div class="r-l"><span class="lb">alpha</span><div class="inp"></div><i class="pill"></i></div>
        <div class="lo"></div>
        <div class="sech d-flex align-items-center"><i class="arr r"></i><span>All Attributes</span></div>
      </div>
    </div>
    <div class="edband"></div>
  </section>

  <aside class="stripe r d-flex flex-column align-items-center">
    <div class="vt vm0"><svg><use href="#gradle"/></svg><span>Gradle</span></div>
    <div class="vt vm1"><svg><use href="#asst"/></svg><span>Assistant</span></div>
    <div class="vt vm3"><svg><use href="#lv"/></svg><span>Layout Validation</span></div>
    <div class="vt vm2"><svg><use href="#emu"/></svg><span>Emulator</span></div>
    <div class="vt vm5"><svg><use href="#dfe"/></svg><span>Device File Explorer</span></div>
  </aside>
</div>

<div class="tools d-flex align-items-center justify-content-between">
  <div class="d-flex tg">
    <span class="ti"><svg><use href="#lst"/></svg>TODO</span><span class="ti"><svg><use href="#term2"/></svg>Terminal</span><span class="ti"><svg><use href="#hammer"/></svg>Build</span><span class="ti"><svg><use href="#logc"/></svg><span><u>6</u>: Logcat</span></span><span class="ti"><svg><use href="#pro2"/></svg>Profiler</span><span class="ti"><svg><use href="#db"/></svg>Database Inspector</span>
  </div>
  <div class="d-flex tg2">
    <span class="ti"><i class="badge1">1</i>Event Log</span><span class="ti"><svg><use href="#li"/></svg>Layout Inspector</span>
  </div>
</div>
<footer class="stat d-flex align-items-center">
  <svg width="11" height="11" class="me-2"><use href="#box"/></svg>
  <span>Android Studio is using the following JDK location when running Gradle: // /usr/java/oracle/jdk1.8.0_261 // Using different JDK locations on ... (13 minutes ago)</span>
  <div class="ms-auto d-flex align-items-center sr"><span>1:1</span><span>LF</span><span class="dim">UTF-8</span><span>4 spaces</span><svg class="i1" width="14" height="14"><use href="#lock"/></svg><svg class="i2" width="15" height="15"><use href="#sm"/></svg><svg class="i3" width="15" height="15"><use href="#fr"/></svg><svg class="i3" width="15" height="15"><use href="#insp"/></svg></div>
</footer>
<div class="foot"></div>
</body></html>
